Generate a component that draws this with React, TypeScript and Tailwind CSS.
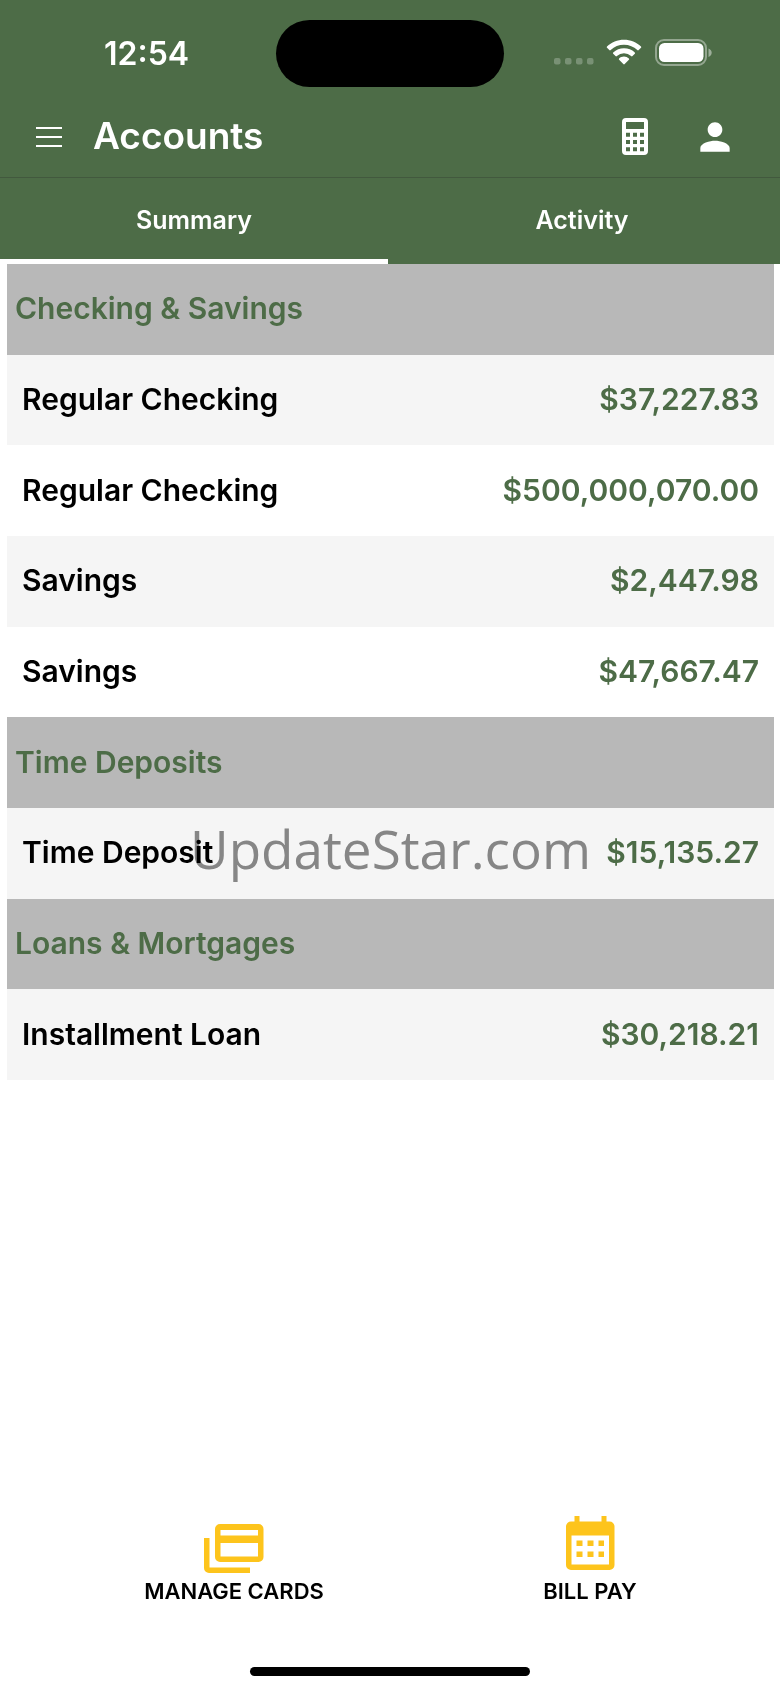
import React, {useState} from "react";

type Account = {
  name: string;
  balance: string;
};

type AccountGroup = {
  title: string;
  accounts: Account[];
};

const groups: AccountGroup[] = [
  {
    title: "Checking & Savings",
    accounts: [
      {name: "Regular Checking", balance: "$37,227.83"},
      {name: "Regular Checking", balance: "$500,000,070.00"},
      {name: "Savings", balance: "$2,447.98"},
      {name: "Savings", balance: "$47,667.47"},
    ],
  },
  {
    title: "Time Deposits",
    accounts: [{name: "Time Deposit", balance: "$15,135.27"}],
  },
  {
    title: "Loans & Mortgages",
    accounts: [{name: "Installment Loan", balance: "$30,218.21"}],
  },
];

const tabs = ["Summary", "Activity"];

const SignalIcon = () => (
  <svg className="h-7 w-10" viewBox="0 0 40 28" fill="#fff" fillOpacity="0.25">
    {[0, 11, 22, 33].map((x) => (
      <rect key={x} x={x} y="20" width="6.5" height="6.5" rx="2" />
    ))}
  </svg>
);

const WifiIcon = () => (
  <svg className="h-7 w-9" viewBox="0 0 36 28" fill="#fff">
    <path d="M18 1.700c-6.500 0-12.600 2.500-17 6.700-.4.4-.4 1 0 1.400l2.300 2.300c.4.4 1 .4 1.400 0A19.200 19.200 0 0 1 18 6.800c5.100 0 9.800 2 13.300 5.300.4.4 1 .4 1.400 0L35 9.800c.4-.4.4-1 0-1.400C30.600 4.200 24.500 1.700 18 1.700z" />
    <path d="M18 10.200c-4.100 0-7.900 1.600-10.800 4.200-.4.4-.4 1 0 1.400l2.300 2.300c.4.4 1 .4 1.400 0a10.600 10.600 0 0 1 14.200 0c.4.4 1 .4 1.400 0l2.300-2.300c.4-.4.4-1 0-1.400A15.900 15.900 0 0 0 18 10.200z" />
    <path d="M18 18.600c-1.900 0-3.600.7-4.900 1.800-.4.4-.4 1 0 1.400l4.200 4.300c.4.4 1 .4 1.400 0l4.200-4.300c.4-.4.4-1 0-1.400A7.600 7.600 0 0 0 18 18.600z" />
  </svg>
);

const BatteryIcon = () => (
  <svg className="h-7 w-[58px]" viewBox="0 0 58 28" fill="none">
    <rect x="1" y="2" width="50" height="25" rx="8" stroke="#fff" strokeOpacity="0.4" strokeWidth="2" />
    <rect x="4" y="5" width="44.5" height="19" rx="5.5" fill="#fff" />
    <path d="M53.5 10.500v8.500c2-.8 3.200-2.400 3.200-4.250S55.500 11.300 53.500 10.500z" fill="#fff" fillOpacity="0.45" />
  </svg>
);

const MenuIcon = () => (
  <svg className="h-6 w-7" viewBox="0 0 28 24" stroke="#fff" strokeWidth="2">
    <path d="M1 3h26M1 12h26M1 21h26" />
  </svg>
);

const CalculatorIcon = () => (
  <svg className="h-[37px] w-[26px]" viewBox="0 0 26 37" fill="#fff">
    <path
      fillRule="evenodd"
      d="M4 0h18a4 4 0 0 1 4 4v29a4 4 0 0 1-4 4H4a4 4 0 0 1-4-4V4a4 4 0 0 1 4-4zM4 4v7h18V4zM4 14.800v4h4v-4zM11 14.800v4h4v-4zM18 14.800v4h4v-4zM4 22v4h4v-4zM11 22v4h4v-4zM18 22v4h4v-4zM4 29.200v4h4v-4zM11 29.200v4h4v-4zM18 29.200v4h4v-4z"
    />
  </svg>
);

const PersonIcon = () => (
  <svg className="size-11" viewBox="0 0 24 24" fill="#fff">
    <path d="M12 12c2.210 0 4-1.790 4-4s-1.790-4-4-4-4 1.790-4 4 1.790 4 4 4zm0 2c-2.670 0-8 1.340-8 4v2h16v-2c0-2.660-5.330-4-8-4z" />
  </svg>
);

const CardsIcon = () => (
  <svg className="h-[49px] w-[60px]" viewBox="0 0 60 49" fill="#fdc41c">
    <path
      fillRule="evenodd"
      d="M16 0h38.500a5 5 0 0 1 5 5v28a5 5 0 0 1-5 5H16a5 5 0 0 1-5-5V5a5 5 0 0 1 5-5zM16.500 6v5.500h37.500V6zM16.500 19v13.500h37.500V19z"
    />
    <path d="M0 14h5.500v29.500H46V49H5a5 5 0 0 1-5-5z" />
  </svg>
);

const CalendarIcon = () => (
  <svg className="h-[57px] w-[49px]" viewBox="0 0 49 57" fill="#fdc41c">
    <path
      fillRule="evenodd"
      d="M8.500 0H13.500v5.500h22V0h5v5.500H43.500a5 5 0 0 1 5 5v38.500a5 5 0 0 1-5 5H5a5 5 0 0 1-5-5V10.500a5 5 0 0 1 5-5H8.500zM5.500 19.500v29h37.500v-29z"
    />
    <path d="M10.500 24.500h6v5.500h-6zM21.500 24.500h6v5.500h-6zM32.500 24.500h5.500v5.500h-5.500zM10.500 35.500h6v5.500h-6zM21.500 35.500h6v5.500h-6zM32.500 35.500h5.500v5.500h-5.500z" />
  </svg>
);

const StatusBar = () => (
  <div className="relative flex h-[107px] items-start justify-between pr-[67px] pl-[104px] text-white">
    <span className="pt-8 text-[32px] leading-[44px] font-semibold">12:54</span>
    <div className="absolute top-5 left-1/2 h-[67px] w-[228px] -translate-x-1/2 rounded-full bg-black" />
    <div className="flex items-center pt-[38px]">
      <SignalIcon />
      <div className="pl-3">
        <WifiIcon />
      </div>
      <div className="pl-[13px]">
        <BatteryIcon />
      </div>
    </div>
  </div>
);

const AccountsTable = () => (
  <div className="relative">
    <table className="h-[816px] w-full table-fixed text-[30px] leading-9 font-semibold">
      {groups.map((group) => (
        <tbody key={group.title}>
          <tr className="bg-[#b8b8b8] text-[#4d6c47]">
            <th colSpan={2} scope="colgroup" className="px-2 pb-0.5 text-left font-semibold">
              {group.title}
            </th>
          </tr>
          {group.accounts.map((account, index) => (
            <tr key={index} className="odd:bg-white even:bg-[#f5f5f5]">
              <th scope="row" className="pb-0.5 pl-[15px] text-left font-semibold text-black">
                {account.name}
              </th>
              <td className="pr-[15px] pb-0.5 text-right text-[#4d6c47]">{account.balance}</td>
            </tr>
          ))}
        </tbody>
      ))}
    </table>
    <span className="pointer-events-none absolute top-[547px] left-1/2 -translate-x-1/2 font-['Open_Sans',sans-serif] text-[53px] leading-[76px] text-[#8c8c8c] mix-blend-multiply">
      UpdateStar.com
    </span>
  </div>
);

export default function App() {
  const [activeTab, setActiveTab] = useState("Summary");

  return (
    <div className="flex min-h-screen flex-col bg-white font-['Inter',sans-serif]">
      <header className="bg-[#4d6c47] text-white">
        <StatusBar />
        <div className="flex h-[71px] items-center border-b border-[#42593e] pr-[43px] pb-[11px] pl-[35px]">
          <button type="button" aria-label="Menu">
            <MenuIcon />
          </button>
          <h1 className="flex-1 pb-0.5 pl-[30px] text-[37px] leading-[46px] font-semibold">
            Accounts
          </h1>
          <button type="button" aria-label="Calculator">
            <CalculatorIcon />
          </button>
          <button type="button" aria-label="Profile" className="ml-[45px]">
            <PersonIcon />
          </button>
        </div>
        <div role="tablist" className="flex h-[86px] pr-1">
          {tabs.map((tab) => (
            <button
              key={tab}
              type="button"
              role="tab"
              aria-selected={activeTab === tab}
              onClick={() => setActiveTab(tab)}
              className={`flex-1 border-b-[5px] pt-1 text-[25px] font-semibold ${
                activeTab === tab ? "border-white" : "border-transparent"
              }`}
            >
              {tab}
            </button>
          ))}
        </div>
      </header>

      <main className="flex-1 pr-1.5 pl-[7px]">
        <AccountsTable />
      </main>

      <nav className="flex items-end pr-3 pl-14 text-[22px] leading-6 font-semibold">
        <button type="button" className="flex flex-1 flex-col items-center gap-1.5">
          <CardsIcon />
          MANAGE CARDS
        </button>
        <button type="button" className="flex flex-1 flex-col items-center gap-1.5">
          <CalendarIcon />
          BILL PAY
        </button>
      </nav>
      <div className="flex justify-center pt-16 pb-[15px]">
        <div className="h-[9px] w-[280px] rounded-full bg-black" />
      </div>
    </div>
  );
}
